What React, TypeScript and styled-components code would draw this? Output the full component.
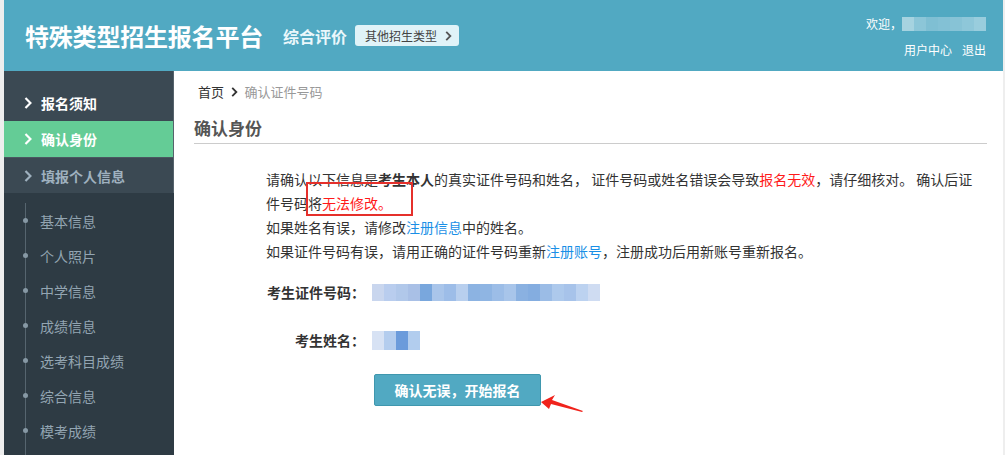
import React from "react";
import styled, { createGlobalStyle } from "styled-components";

const Global = createGlobalStyle`
  html, body { margin: 0; padding: 0; }
  body {
    background: #eeeeee;
    font-family: "Noto Sans CJK SC", "Noto Sans", sans-serif;
    color: #333;
  }
  * { box-sizing: border-box; }
`;

const Page = styled.div`
  margin: 0 2px 0 4px;
  min-height: 455px;
  height: 455px;
  display: flex;
  flex-direction: column;
  background: #fff;
  overflow: hidden;
`;

const Header = styled.header`
  height: 71px;
  flex: none;
  background: #51a9c2;
  display: flex;
  align-items: center;
  padding: 0 17px 0 21px;
  color: #fff;
`;

const Brand = styled.h1`
  margin: 0;
  font-size: 24px;
  font-weight: 700;
  letter-spacing: -0.2px;
  line-height: 32px;
`;

const SubBrand = styled.span`
  margin-left: 20px;
  font-size: 16px;
  font-weight: 700;
  color: #eaf7fb;
`;

const TypeButton = styled.button`
  margin-left: 8px;
  height: 21px;
  width: 104px;
  padding: 0 0 0 10px;
  border: none;
  border-radius: 3px;
  background: #e0f3f8;
  color: #444;
  font-family: inherit;
  font-size: 12px;
  display: flex;
  align-items: center;
  gap: 8px;
`;

const UserBox = styled.div`
  margin-left: auto;
  display: flex;
  flex-direction: column;
  align-items: flex-end;
  gap: 8px;
  font-size: 12px;
  padding-top: 2px;
`;

const WelcomeRow = styled.div`
  display: flex;
  align-items: center;
  line-height: 18px;
`;

const LinksRow = styled.div`
  display: flex;
  gap: 10px;
  line-height: 18px;
`;

const Body = styled.div`
  flex: 1;
  display: flex;
  min-height: 0;
`;

const Sidebar = styled.nav`
  width: 170px;
  flex: none;
  display: flex;
  flex-direction: column;
  background: #2e3b44;
`;

const TopMenu = styled.div`
  background: #3b4953;
  padding-top: 14px;
  border-right: 1px solid #56636c;
`;

const TopItem = styled.div<{ $active?: boolean; $muted?: boolean }>`
  height: 36px;
  display: flex;
  align-items: center;
  padding-left: 20px;
  gap: 9px;
  font-size: 14px;
  font-weight: 700;
  background: ${(p) => (p.$active ? "#64cc96" : "transparent")};
  color: ${(p) => (p.$muted ? "#9fb1bf" : "#fff")};
  border-top: ${(p) => (p.$muted ? "1px solid #4a5760" : "none")};
`;

const SubMenu = styled.ul`
  list-style: none;
  margin: 0;
  padding: 10px 0 0 0;
  position: relative;
  flex: 1;
  &::before {
    content: "";
    position: absolute;
    left: 21px;
    top: 10px;
    bottom: 0;
    width: 1px;
    background: #56656f;
  }
`;

const SubItem = styled.li`
  height: 35px;
  display: flex;
  align-items: center;
  padding-left: 36px;
  font-size: 14px;
  color: #93a5b2;
  position: relative;
  &::before {
    content: "";
    position: absolute;
    left: 19px;
    top: 15px;
    width: 5px;
    height: 5px;
    border-radius: 50%;
    background: #8799a5;
  }
`;

const Content = styled.main`
  flex: 1;
  padding: 11px 16px 0 20px;
`;

const Crumbs = styled.div`
  display: flex;
  align-items: center;
  gap: 7px;
  padding-left: 4px;
  font-size: 13px;
  line-height: 20px;
  color: #333;
`;

const CrumbCurrent = styled.span`
  color: #999;
`;

const Title = styled.h2`
  margin: 14px 0 0 0;
  padding-bottom: 3px;
  font-size: 17px;
  line-height: 24px;
  font-weight: 700;
  color: #555;
  border-bottom: 1px solid #cccccc;
`;

const Notice = styled.div`
  position: relative;
  margin: 23px 0 0 72px;
  width: 716px;
  font-size: 14px;
  line-height: 24px;
  color: #333;
`;

const P = styled.p`
  margin: 0;
`;

const Strong = styled.b`
  font-weight: 700;
`;

const Red = styled.span`
  color: #ff1a1a;
`;

const Link = styled.span`
  color: #1a8fe6;
`;

const Highlight = styled.div`
  position: absolute;
  left: 40px;
  top: 15px;
  width: 107px;
  height: 34px;
  border: 2px solid #e5302b;
  pointer-events: none;
`;

const Fields = styled.div`
  margin: 17px 0 0 71px;
  display: flex;
  flex-direction: column;
  gap: 24px;
`;

const FieldRow = styled.div`
  display: grid;
  grid-template-columns: 100px auto;
  column-gap: 7px;
  align-items: center;
  height: 24px;
`;

const Label = styled.span`
  text-align: right;
  font-size: 14px;
  font-weight: 700;
  color: #333;
  white-space: nowrap;
`;

const Blur = styled.div`
  display: flex;
  filter: blur(0.6px);
`;

const Pix = styled.span<{ $c: string; $h?: number }>`
  display: block;
  width: 12px;
  height: ${(p) => p.$h ?? 17}px;
  background: ${(p) => p.$c};
`;

const ActionRow = styled.div`
  margin: 22px 0 0 180px;
  position: relative;
  width: 167px;
`;

const Primary = styled.button`
  width: 167px;
  height: 32px;
  border: 1px solid #3f97ae;
  border-radius: 2px;
  background: #51a9c2;
  color: #fff;
  font-family: inherit;
  font-size: 14px;
  font-weight: 700;
`;

const ArrowMark = styled.svg`
  position: absolute;
  left: 165px;
  top: 18px;
  pointer-events: none;
`;

const Chevron = ({ color = "#fff", size = 12 }: { color?: string; size?: number }) => (
  <svg width={size * 0.66} height={size} viewBox="0 0 8 12">
    <polyline points="1.5,1 6.5,6 1.5,11" fill="none" stroke={color} strokeWidth="2.2" />
  </svg>
);

const idColors = [
  "#c9d6ee", "#b9cdee", "#b1c8ea", "#a9c0e6", "#79a7dd", "#a9c5ea", "#9dbde8",
  "#b8cfee", "#8cb3e2", "#8fb5e3", "#9cbde7", "#a8c5ea", "#8ab1e1", "#84ade0",
  "#9bbce6", "#adc9ec", "#a7c3ea", "#bcd2f0", "#cfdcf2",
];
const nameColors = ["#d7e2f4", "#b4cdee", "#6b9bdb", "#b2cdee"];
const welcomeColors = ["#a6d3e0", "#8cc6d8", "#7fbfd3", "#83c1d5", "#87c3d6", "#8ec7d9", "#99cddd"];

export default function App() {
  return (
    <>
      <Global />
      <Page>
        <Header>
          <Brand>特殊类型招生报名平台</Brand>
          <SubBrand>综合评价</SubBrand>
          <TypeButton>
            其他招生类型
            <Chevron color="#555" size={10} />
          </TypeButton>
          <UserBox>
            <WelcomeRow>
              欢迎，
              <Blur>
                {welcomeColors.map((c, i) => (
                  <Pix key={i} $c={c} $h={14} />
                ))}
              </Blur>
            </WelcomeRow>
            <LinksRow>
              <span>用户中心</span>
              <span>退出</span>
            </LinksRow>
          </UserBox>
        </Header>
        <Body>
          <Sidebar>
            <TopMenu>
              <TopItem>
                <Chevron />
                报名须知
              </TopItem>
              <TopItem $active>
                <Chevron />
                确认身份
              </TopItem>
              <TopItem $muted>
                <Chevron color="#9fb1bf" />
                填报个人信息
              </TopItem>
            </TopMenu>
            <SubMenu>
              {["基本信息", "个人照片", "中学信息", "成绩信息", "选考科目成绩", "综合信息", "模考成绩"].map((t) => (
                <SubItem key={t}>{t}</SubItem>
              ))}
            </SubMenu>
          </Sidebar>
          <Content>
            <Crumbs>
              <span>首页</span>
              <Chevron color="#333" size={10} />
              <CrumbCurrent>确认证件号码</CrumbCurrent>
            </Crumbs>
            <Title>确认身份</Title>
            <Notice>
              <P>
                请确认以下信息是<Strong>考生本人</Strong>的真实证件号码和姓名， 证件号码或姓名错误会导致
                <Red>报名无效</Red>，请仔细核对。 确认后证件号码将<Red>无法修改。</Red>
              </P>
              <P>
                如果姓名有误，请修改<Link>注册信息</Link>中的姓名。
              </P>
              <P>
                如果证件号码有误，请用正确的证件号码重新<Link>注册账号</Link>，注册成功后用新账号重新报名。
              </P>
              <Highlight />
            </Notice>
            <Fields>
              <FieldRow>
                <Label>考生证件号码：</Label>
                <Blur>
                  {idColors.map((c, i) => (
                    <Pix key={i} $c={c} />
                  ))}
                </Blur>
              </FieldRow>
              <FieldRow>
                <Label>考生姓名：</Label>
                <Blur>
                  {nameColors.map((c, i) => (
                    <Pix key={i} $c={c} $h={19} />
                  ))}
                </Blur>
              </FieldRow>
            </Fields>
            <ActionRow>
              <Primary>确认无误，开始报名</Primary>
              <ArrowMark width="50" height="22" viewBox="0 0 50 22">
                <polygon points="2,10 16,3 13,8 44,19 43,20 12,12 10,17" fill="#f0231c" />
              </ArrowMark>
            </ActionRow>
          </Content>
        </Body>
      </Page>
    </>
  );
}
